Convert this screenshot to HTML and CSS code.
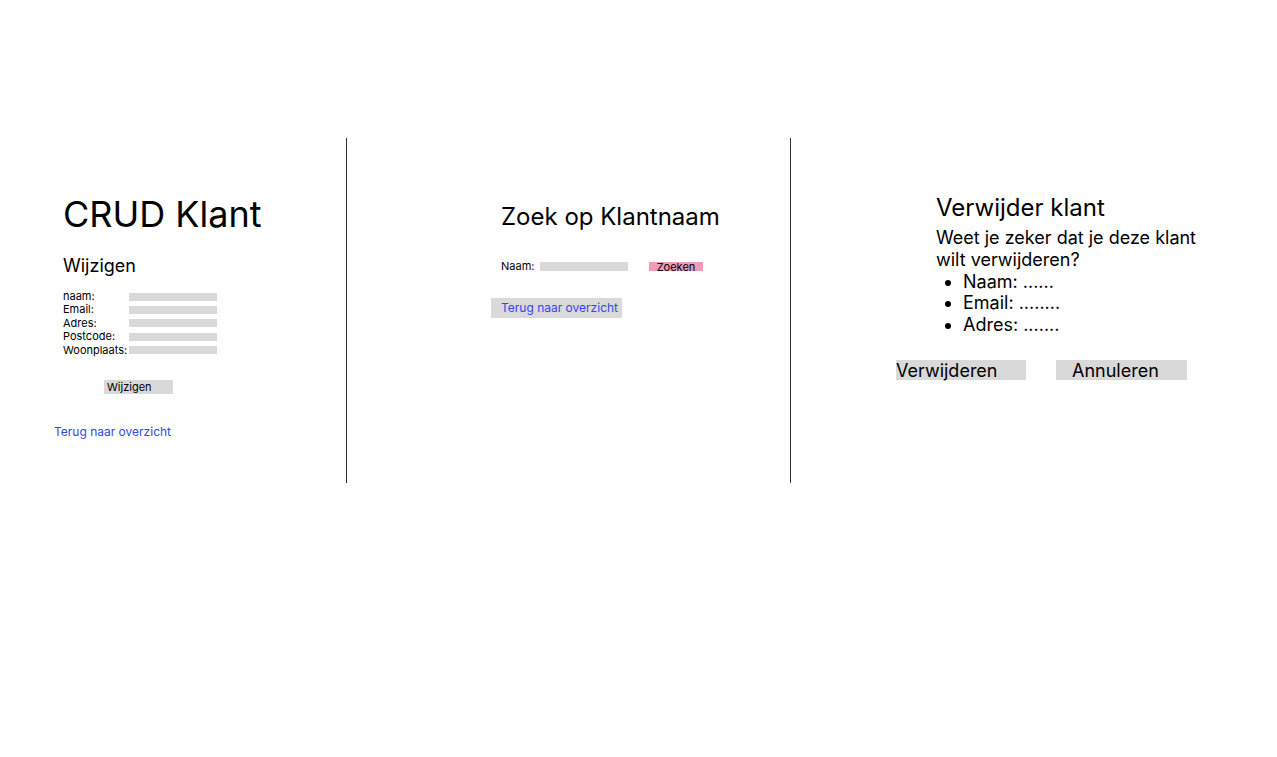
FILE: index.html
```html
<!DOCTYPE html>
<html lang="nl">
<head>
<meta charset="utf-8">
<title>CRUD Klant</title>
<link rel="stylesheet" href="styles.css">
</head>
<body>
<main class="screens">
  <section class="col col-edit">
    <h1 class="title">CRUD Klant</h1>
    <h2 class="subtitle">Wijzigen</h2>
    <div class="form">
      <span class="lbl">naam:</span><span class="field"></span>
      <span class="lbl">Email:</span><span class="field"></span>
      <span class="lbl">Adres:</span><span class="field"></span>
      <span class="lbl">Postcode:</span><span class="field"></span>
      <span class="lbl">Woonplaats:</span><span class="field"></span>
    </div>
    <button class="btn-small">Wijzigen</button>
    <a class="link" href="#">Terug naar overzicht</a>
  </section>
  <section class="col col-search">
    <h2 class="search-title">Zoek op Klantnaam</h2>
    <div class="search-row">
      <span class="search-lbl">Naam:</span>
      <span class="search-field"></span>
      <button class="btn-pink">Zoeken</button>
    </div>
    <a class="btn-back" href="#">Terug naar overzicht</a>
  </section>
  <section class="col col-delete">
    <h2 class="del-title">Verwijder klant</h2>
    <p class="del-text">Weet je zeker dat je deze klant wilt verwijderen?</p>
    <ul class="del-list">
      <li>Naam: ......</li>
      <li>Email: ........</li>
      <li>Adres: .......</li>
    </ul>
    <div class="del-actions">
      <button class="btn-big btn-del">Verwijderen</button>
      <button class="btn-big btn-cancel">Annuleren</button>
    </div>
  </section>
</main>
</body>
</html>
```
FILE: styles.css
```css
* { box-sizing: border-box; }
html, body { margin: 0; padding: 0; background: #fff; }
body {
  font-family: Inter, "Noto Sans", sans-serif;
  color: #000;
  width: 1277px;
  height: 757px;
  overflow: hidden;
}
button {
  font-family: inherit;
  border: 0;
  margin: 0;
  color: #000;
  text-align: left;
  cursor: pointer;
}
h1, h2, p, ul { margin: 0; font-weight: 400; }

.screens {
  display: flex;
  padding-top: 138px;
}
.col {
  height: 345px;
  display: flex;
  flex-direction: column;
  align-items: flex-start;
}
.col-edit {
  width: 347px;
  border-right: 1px solid #333;
  padding-left: 54px;
}
.col-search {
  width: 444px;
  border-right: 1px solid #333;
  padding-left: 154px;
}
.col-delete {
  flex: 1;
  padding-left: 145px;
}

/* column 1 */
.title {
  font-size: 36px;
  line-height: 36px;
  margin: 58px 0 0 9px;
}
.subtitle {
  font-size: 18px;
  line-height: 18px;
  margin: 25px 0 0 9px;
}
.form {
  display: grid;
  grid-template-columns: 66px 88px;
  grid-auto-rows: 13.4px;
  align-items: center;
  margin: 15px 0 0 9px;
  font-size: 11px;
  line-height: 13.4px;
}
.field {
  height: 8px;
  background: #d9d9d9;
}
.btn-small {
  width: 69px;
  height: 14px;
  padding: 0 0 0 3px;
  background: #d9d9d9;
  font-size: 11px;
  line-height: 14px;
  margin: 23px 0 0 50px;
}
.link {
  font-size: 12px;
  line-height: 14.5px;
  color: #3346f0;
  text-decoration: none;
  margin-top: 31px;
}

/* column 2 */
.search-title {
  font-size: 24px;
  line-height: 24px;
  margin-top: 67px;
}
.search-row {
  display: flex;
  align-items: flex-start;
  margin-top: 31px;
  font-size: 11px;
  line-height: 13.3px;
}
.search-lbl { width: 39px; }
.search-field {
  width: 88px;
  height: 9px;
  margin-top: 2px;
  background: #d9d9d9;
}
.btn-pink {
  width: 54px;
  height: 9px;
  margin: 2px 0 0 21px;
  padding: 0;
  background: #ef9ab7;
  font-size: 11px;
  line-height: 10px;
  text-align: center;
}
.btn-back {
  width: 131px;
  height: 20px;
  margin: 25px 0 0 -10px;
  padding-left: 10px;
  background: #d9d9d9;
  color: #3346f0;
  font-size: 12px;
  line-height: 20px;
  text-decoration: none;
}

/* column 3 */
.del-title {
  font-size: 24px;
  line-height: 24px;
  margin-top: 58px;
}
.del-text {
  width: 270px;
  font-size: 18px;
  line-height: 21.8px;
  margin-top: 7px;
}
.del-list {
  font-size: 18px;
  line-height: 21.8px;
  padding-left: 27px;
  margin-top: 0;
}
.del-actions {
  display: flex;
  margin: 24px 0 0 -40px;
}
.btn-big {
  height: 20px;
  background: #d9d9d9;
  font-size: 18px;
  line-height: 21px;
  padding: 0;
}
.btn-del { width: 130px; }
.btn-cancel {
  width: 131px;
  margin-left: 30px;
  padding-left: 16px;
}
```
